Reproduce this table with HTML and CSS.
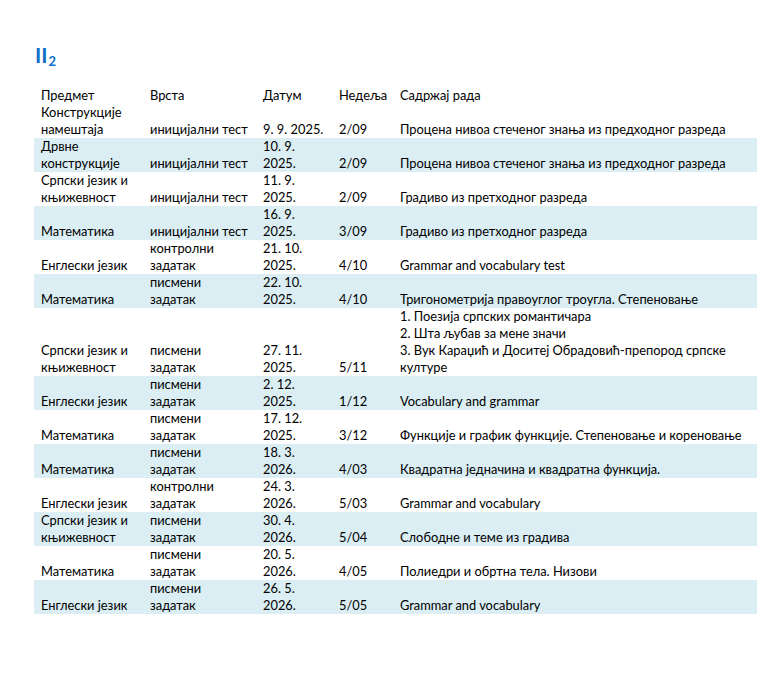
FILE: index.html
```html
<!DOCTYPE html>
<html lang="sr">
<head>
<meta charset="utf-8">
<title>Распоред писмених провера</title>
<link rel="stylesheet" href="styles.css">
</head>
<body>
<div class="page">
  <h1 class="title">II<sub>2</sub></h1>
  <table class="schedule">
    <colgroup>
      <col class="c-subj"><col class="c-type"><col class="c-date"><col class="c-week"><col class="c-cont">
    </colgroup>
    <thead>
      <tr><th>Предмет</th><th>Врста</th><th>Датум</th><th>Недеља</th><th>Садржај рада</th></tr>
    </thead>
    <tbody>
      <tr><td>Конструкције<br>намештаја</td><td>иницијални тест</td><td>9. 9. 2025.</td><td>2/09</td><td>Процена нивоа стеченог знања из предходног разреда</td></tr>
      <tr><td>Дрвне<br>конструкције</td><td>иницијални тест</td><td>10. 9.<br>2025.</td><td>2/09</td><td>Процена нивоа стеченог знања из предходног разреда</td></tr>
      <tr><td>Српски језик и<br>књижевност</td><td>иницијални тест</td><td>11. 9.<br>2025.</td><td>2/09</td><td>Градиво из претходног разреда</td></tr>
      <tr><td>Математика</td><td>иницијални тест</td><td>16. 9.<br>2025.</td><td>3/09</td><td>Градиво из претходног разреда</td></tr>
      <tr><td>Енглески језик</td><td>контролни<br>задатак</td><td>21. 10.<br>2025.</td><td>4/10</td><td>Grammar and vocabulary test</td></tr>
      <tr><td>Математика</td><td>писмени<br>задатак</td><td>22. 10.<br>2025.</td><td>4/10</td><td>Тригонометрија правоуглог троугла. Степеновање</td></tr>
      <tr><td>Српски језик и<br>књижевност</td><td>писмени<br>задатак</td><td>27. 11.<br>2025.</td><td>5/11</td><td>1. Поезија српских романтичара<br>2. Шта љубав за мене значи<br>3. Вук Караџић и Доситеј Обрадовић-препород српске<br>културе</td></tr>
      <tr><td>Енглески језик</td><td>писмени<br>задатак</td><td>2. 12.<br>2025.</td><td>1/12</td><td>Vocabulary and grammar</td></tr>
      <tr><td>Математика</td><td>писмени<br>задатак</td><td>17. 12.<br>2025.</td><td>3/12</td><td>Функције и график функције. Степеновање и кореновање</td></tr>
      <tr><td>Математика</td><td>писмени<br>задатак</td><td>18. 3.<br>2026.</td><td>4/03</td><td>Квадратна једначина и квадратна функција.</td></tr>
      <tr><td>Енглески језик</td><td>контролни<br>задатак</td><td>24. 3.<br>2026.</td><td>5/03</td><td>Grammar and vocabulary</td></tr>
      <tr><td>Српски језик и<br>књижевност</td><td>писмени<br>задатак</td><td>30. 4.<br>2026.</td><td>5/04</td><td>Слободне и теме из градива</td></tr>
      <tr><td>Математика</td><td>писмени<br>задатак</td><td>20. 5.<br>2026.</td><td>4/05</td><td>Полиедри и обртна тела. Низови</td></tr>
      <tr><td>Енглески језик</td><td>писмени<br>задатак</td><td>26. 5.<br>2026.</td><td>5/05</td><td>Grammar and vocabulary</td></tr>
    </tbody>
  </table>
</div>
</body>
</html>
```
FILE: styles.css
```css
html, body {
  margin: 0;
  padding: 0;
  background: #ffffff;
}

body {
  font-family: "Lato", "Liberation Sans", sans-serif;
  color: #000000;
}

.page {
  padding: 42px 0 0 34px;
}

.title {
  margin: 0 0 20px 1px;
  font-size: 21px;
  line-height: 25px;
  height: 25px;
  font-weight: 700;
  color: #0f6fc6;
}

.title sub {
  font-size: 13px;
  line-height: 0;
  vertical-align: -3px;
  margin-left: 1px;
}

.schedule {
  border-collapse: collapse;
  table-layout: fixed;
  width: 723px;
  font-size: 12.85px;
  line-height: 17px;
}

.c-subj { width: 109px; }
.c-type { width: 113px; }
.c-date { width: 76px; }
.c-week { width: 61px; }
.c-cont { width: 364px; }

.schedule th,
.schedule td {
  padding: 0 7px;
  height: 17px;
  text-align: left;
  vertical-align: bottom;
  font-weight: 400;
  white-space: nowrap;
}

.schedule tbody tr:nth-child(even) {
  background: #daeef3;
}
```
